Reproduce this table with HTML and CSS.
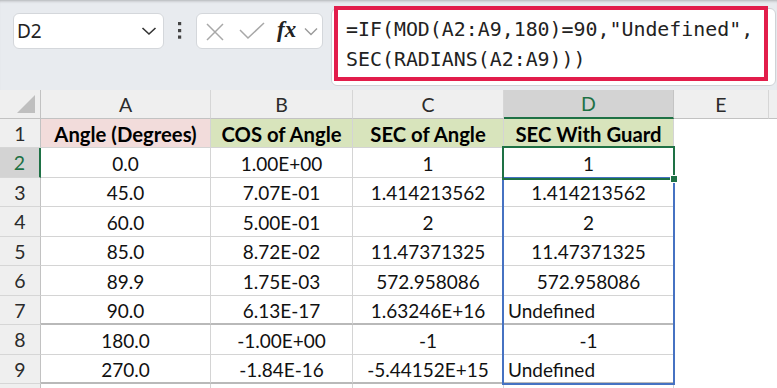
FILE: index.html
```html
<!DOCTYPE html>
<html>
<head>
<meta charset="utf-8">
<link rel="stylesheet" href="styles.css">
</head>
<body>
<div class="topbar">
  <div class="namebox">
    <span class="nb-text">D2</span>
    <svg class="nb-chev" width="16" height="10" viewBox="0 0 16 10"><polyline points="1.5,2 8,8 14.5,2" fill="none" stroke="#333" stroke-width="1.6"/></svg>
  </div>
  <div class="dots">
    <svg width="6" height="20" viewBox="0 0 6 20"><rect x="1" y="1" width="3.2" height="3.2" fill="#444"/><rect x="1" y="8" width="3.2" height="3.2" fill="#444"/><rect x="1" y="14.5" width="3.2" height="3.2" fill="#444"/></svg>
  </div>
  <div class="fxbox">
    <svg class="ic-x" width="20" height="20" viewBox="0 0 20 20"><path d="M2 2 L18 18 M18 2 L2 18" stroke="#a8a8a8" stroke-width="1.5" fill="none"/></svg>
    <svg class="ic-check" width="26" height="18" viewBox="0 0 26 18"><polyline points="1,8 9,16 25,1" fill="none" stroke="#a8a8a8" stroke-width="1.5"/></svg>
    <span class="fx">fx</span>
    <svg class="fx-chev" width="14" height="9" viewBox="0 0 14 9"><polyline points="1,1.5 7,7.5 13,1.5" fill="none" stroke="#9a9a9a" stroke-width="1.4"/></svg>
  </div>
  <div class="formula">
    <div class="formula-red">=IF(MOD(A2:A9,180)=90,"Undefined",<br>SEC(RADIANS(A2:A9)))</div>
  </div>
</div>

<div class="sheet">
  <!-- header row -->
  <div class="corner"><svg width="20" height="20" viewBox="0 0 20 20"><polygon points="19,1 19,19 1,19" fill="#bfbfbf"/></svg></div>
  <div class="ch">A</div>
  <div class="ch">B</div>
  <div class="ch">C</div>
  <div class="ch ch-sel">D</div>
  <div class="ch">E</div>
  <div class="ch ch-last"></div>

  <!-- row 1 -->
  <div class="rh">1</div>
  <div class="c hd pink">Angle (Degrees)</div>
  <div class="c hd green">COS of Angle</div>
  <div class="c hd green">SEC of Angle</div>
  <div class="c hd green">SEC With Guard</div>
  <div class="e"></div>
  <div class="e"></div>

  <!-- row 2 -->
  <div class="rh rh-sel">2</div>
  <div class="c">0.0</div>
  <div class="c">1.00E+00</div>
  <div class="c">1</div>
  <div class="c">1</div>
  <div class="e"></div>
  <div class="e"></div>

  <!-- row 3 -->
  <div class="rh">3</div>
  <div class="c">45.0</div>
  <div class="c">7.07E-01</div>
  <div class="c">1.414213562</div>
  <div class="c">1.414213562</div>
  <div class="e"></div>
  <div class="e"></div>

  <!-- row 4 -->
  <div class="rh">4</div>
  <div class="c">60.0</div>
  <div class="c">5.00E-01</div>
  <div class="c">2</div>
  <div class="c">2</div>
  <div class="e"></div>
  <div class="e"></div>

  <!-- row 5 -->
  <div class="rh">5</div>
  <div class="c">85.0</div>
  <div class="c">8.72E-02</div>
  <div class="c">11.47371325</div>
  <div class="c">11.47371325</div>
  <div class="e"></div>
  <div class="e"></div>

  <!-- row 6 -->
  <div class="rh">6</div>
  <div class="c">89.9</div>
  <div class="c">1.75E-03</div>
  <div class="c">572.958086</div>
  <div class="c">572.958086</div>
  <div class="e"></div>
  <div class="e"></div>

  <!-- row 7 -->
  <div class="rh">7</div>
  <div class="c thick">90.0</div>
  <div class="c thick">6.13E-17</div>
  <div class="c thick">1.63246E+16</div>
  <div class="c thick left">Undefined</div>
  <div class="e"></div>
  <div class="e"></div>

  <!-- row 8 -->
  <div class="rh">8</div>
  <div class="c">180.0</div>
  <div class="c">-1.00E+00</div>
  <div class="c">-1</div>
  <div class="c">-1</div>
  <div class="e"></div>
  <div class="e"></div>

  <!-- row 9 -->
  <div class="rh">9</div>
  <div class="c thick">270.0</div>
  <div class="c thick">-1.84E-16</div>
  <div class="c thick">-5.44152E+15</div>
  <div class="c thick left">Undefined</div>
  <div class="e"></div>
  <div class="e"></div>

  <!-- row 10 (partially visible) -->
  <div class="rh"></div>
  <div class="c"></div>
  <div class="c"></div>
  <div class="c"></div>
  <div class="c"></div>
  <div class="e"></div>
  <div class="e"></div>

  <!-- selection overlays -->
  <div class="spill"></div>
  <div class="active"><span class="handle"></span></div>
</div>
</body>
</html>
```

FILE: styles.css
```css
* { box-sizing: border-box; }

html, body {
  margin: 0;
  padding: 0;
  background: #ffffff;
  overflow: hidden;
}

body {
  width: 777px;
  height: 388px;
  font-family: Lato, "Open Sans", sans-serif;
}

/* ---------- top bar ---------- */
.topbar {
  height: 90px;
  background: #e8ebef;
  display: flex;
  align-items: flex-start;
  padding-left: 13px;
  box-shadow: inset 0 3px 3px -2px rgba(0, 0, 0, 0.25);
}

.namebox {
  margin-top: 13px;
  width: 151px;
  height: 36px;
  background: #ffffff;
  border: 1px solid #d4d7db;
  border-radius: 6px;
  display: flex;
  align-items: center;
  justify-content: space-between;
  padding: 0 6px 0 3px;
}

.nb-text {
  font-family: "Noto Sans", sans-serif;
  font-size: 19px;
  color: #222;
}

.dots {
  width: 32px;
  height: 49px;
  display: flex;
  align-items: center;
  justify-content: center;
  padding-top: 12px;
}

.fxbox {
  margin-top: 13px;
  width: 127px;
  height: 36px;
  background: #ffffff;
  border: 1px solid #d4d7db;
  border-radius: 6px;
  display: flex;
  align-items: center;
  padding-left: 8px;
}

.ic-x { margin-top: 2px; }
.ic-check { margin-left: 14px; }

.fx {
  margin-left: 12px;
  font-family: "Liberation Serif", serif;
  font-style: italic;
  font-weight: bold;
  font-size: 23px;
  color: #222;
  line-height: 1;
  margin-top: -4px;
}

.fx-chev { margin-left: 8px; }

.formula {
  margin-top: 8px;
  margin-left: 8px;
  width: 445px;
  height: 78px;
  background: #ffffff;
  border: 1px solid #cfd2d6;
  border-radius: 6px;
}

.formula-red {
  margin: -3px 0 0 2px;
  width: 434px;
  height: 75px;
  border: 4px solid #e21d4b;
  padding: 5px 0 0 8px;
  font-family: "DejaVu Sans Mono", monospace;
  font-size: 19.9px;
  line-height: 30px;
  color: #222;
  white-space: nowrap;
}

/* ---------- sheet ---------- */
.sheet {
  position: relative;
  display: grid;
  grid-template-columns: 41px 170px 142px 151px 170px 95px 1fr;
  grid-template-rows: 29px 29px 30px 29px 30px 29px 30px 29px 30px 29px 30px;
}

.corner {
  background: #efefef;
  border-right: 1px solid #c2c2c2;
  border-bottom: 1px solid #c2c2c2;
  display: flex;
  align-items: flex-end;
  justify-content: flex-end;
  padding: 0 4px 4px 0;
}

.ch {
  background: #efefef;
  border-right: 1px solid #d6d6d6;
  border-bottom: 1px solid #c2c2c2;
  display: flex;
  align-items: center;
  justify-content: center;
  font-size: 19.5px;
  color: #2b2b2b;
}

.ch-sel {
  background: #d3d3d3;
  color: #1e7145;
  border-bottom: 2px solid #1e7145;
  border-right-color: #c4c4c4;
}

.ch-last { border-right: none; }

.rh {
  background: #efefef;
  border-right: 1px solid #c2c2c2;
  border-bottom: 1px solid #d6d6d6;
  display: flex;
  align-items: center;
  justify-content: center;
  font-size: 19.5px;
  color: #2b2b2b;
}

.rh-sel {
  background: #d3d3d3;
  color: #1e7145;
  border-right: 2px solid #1e7145;
}

.c {
  border-right: 1px solid #d4d4d4;
  border-bottom: 1px solid #d4d4d4;
  display: flex;
  align-items: center;
  justify-content: center;
  font-size: 19px;
  color: #111;
  white-space: nowrap;
  padding-top: 1px;
}

.c.thick { border-bottom: 2px solid #b9b9b9; }

.c.left {
  justify-content: flex-start;
  padding-left: 4px;
}

.hd {
  font-weight: bold;
  font-size: 20.3px;
  color: #000;
}

.pink { background: #f2dcdb; }
.green { background: #d8e4bc; }

.e { background: #ffffff; }

/* selection overlays drawn over the cells */
.spill {
  position: absolute;
  left: 502px;
  top: 87px;
  width: 173px;
  height: 208px;
  border: 2px solid #4672c2;
  z-index: 1;
}

.active {
  position: absolute;
  left: 502px;
  top: 56px;
  width: 173px;
  height: 34px;
  border: 2px solid #1e7145;
  z-index: 2;
}

.handle {
  position: absolute;
  right: -5px;
  bottom: -5px;
  width: 8px;
  height: 8px;
  background: #1e7145;
  border: 1px solid #ffffff;
}
```
